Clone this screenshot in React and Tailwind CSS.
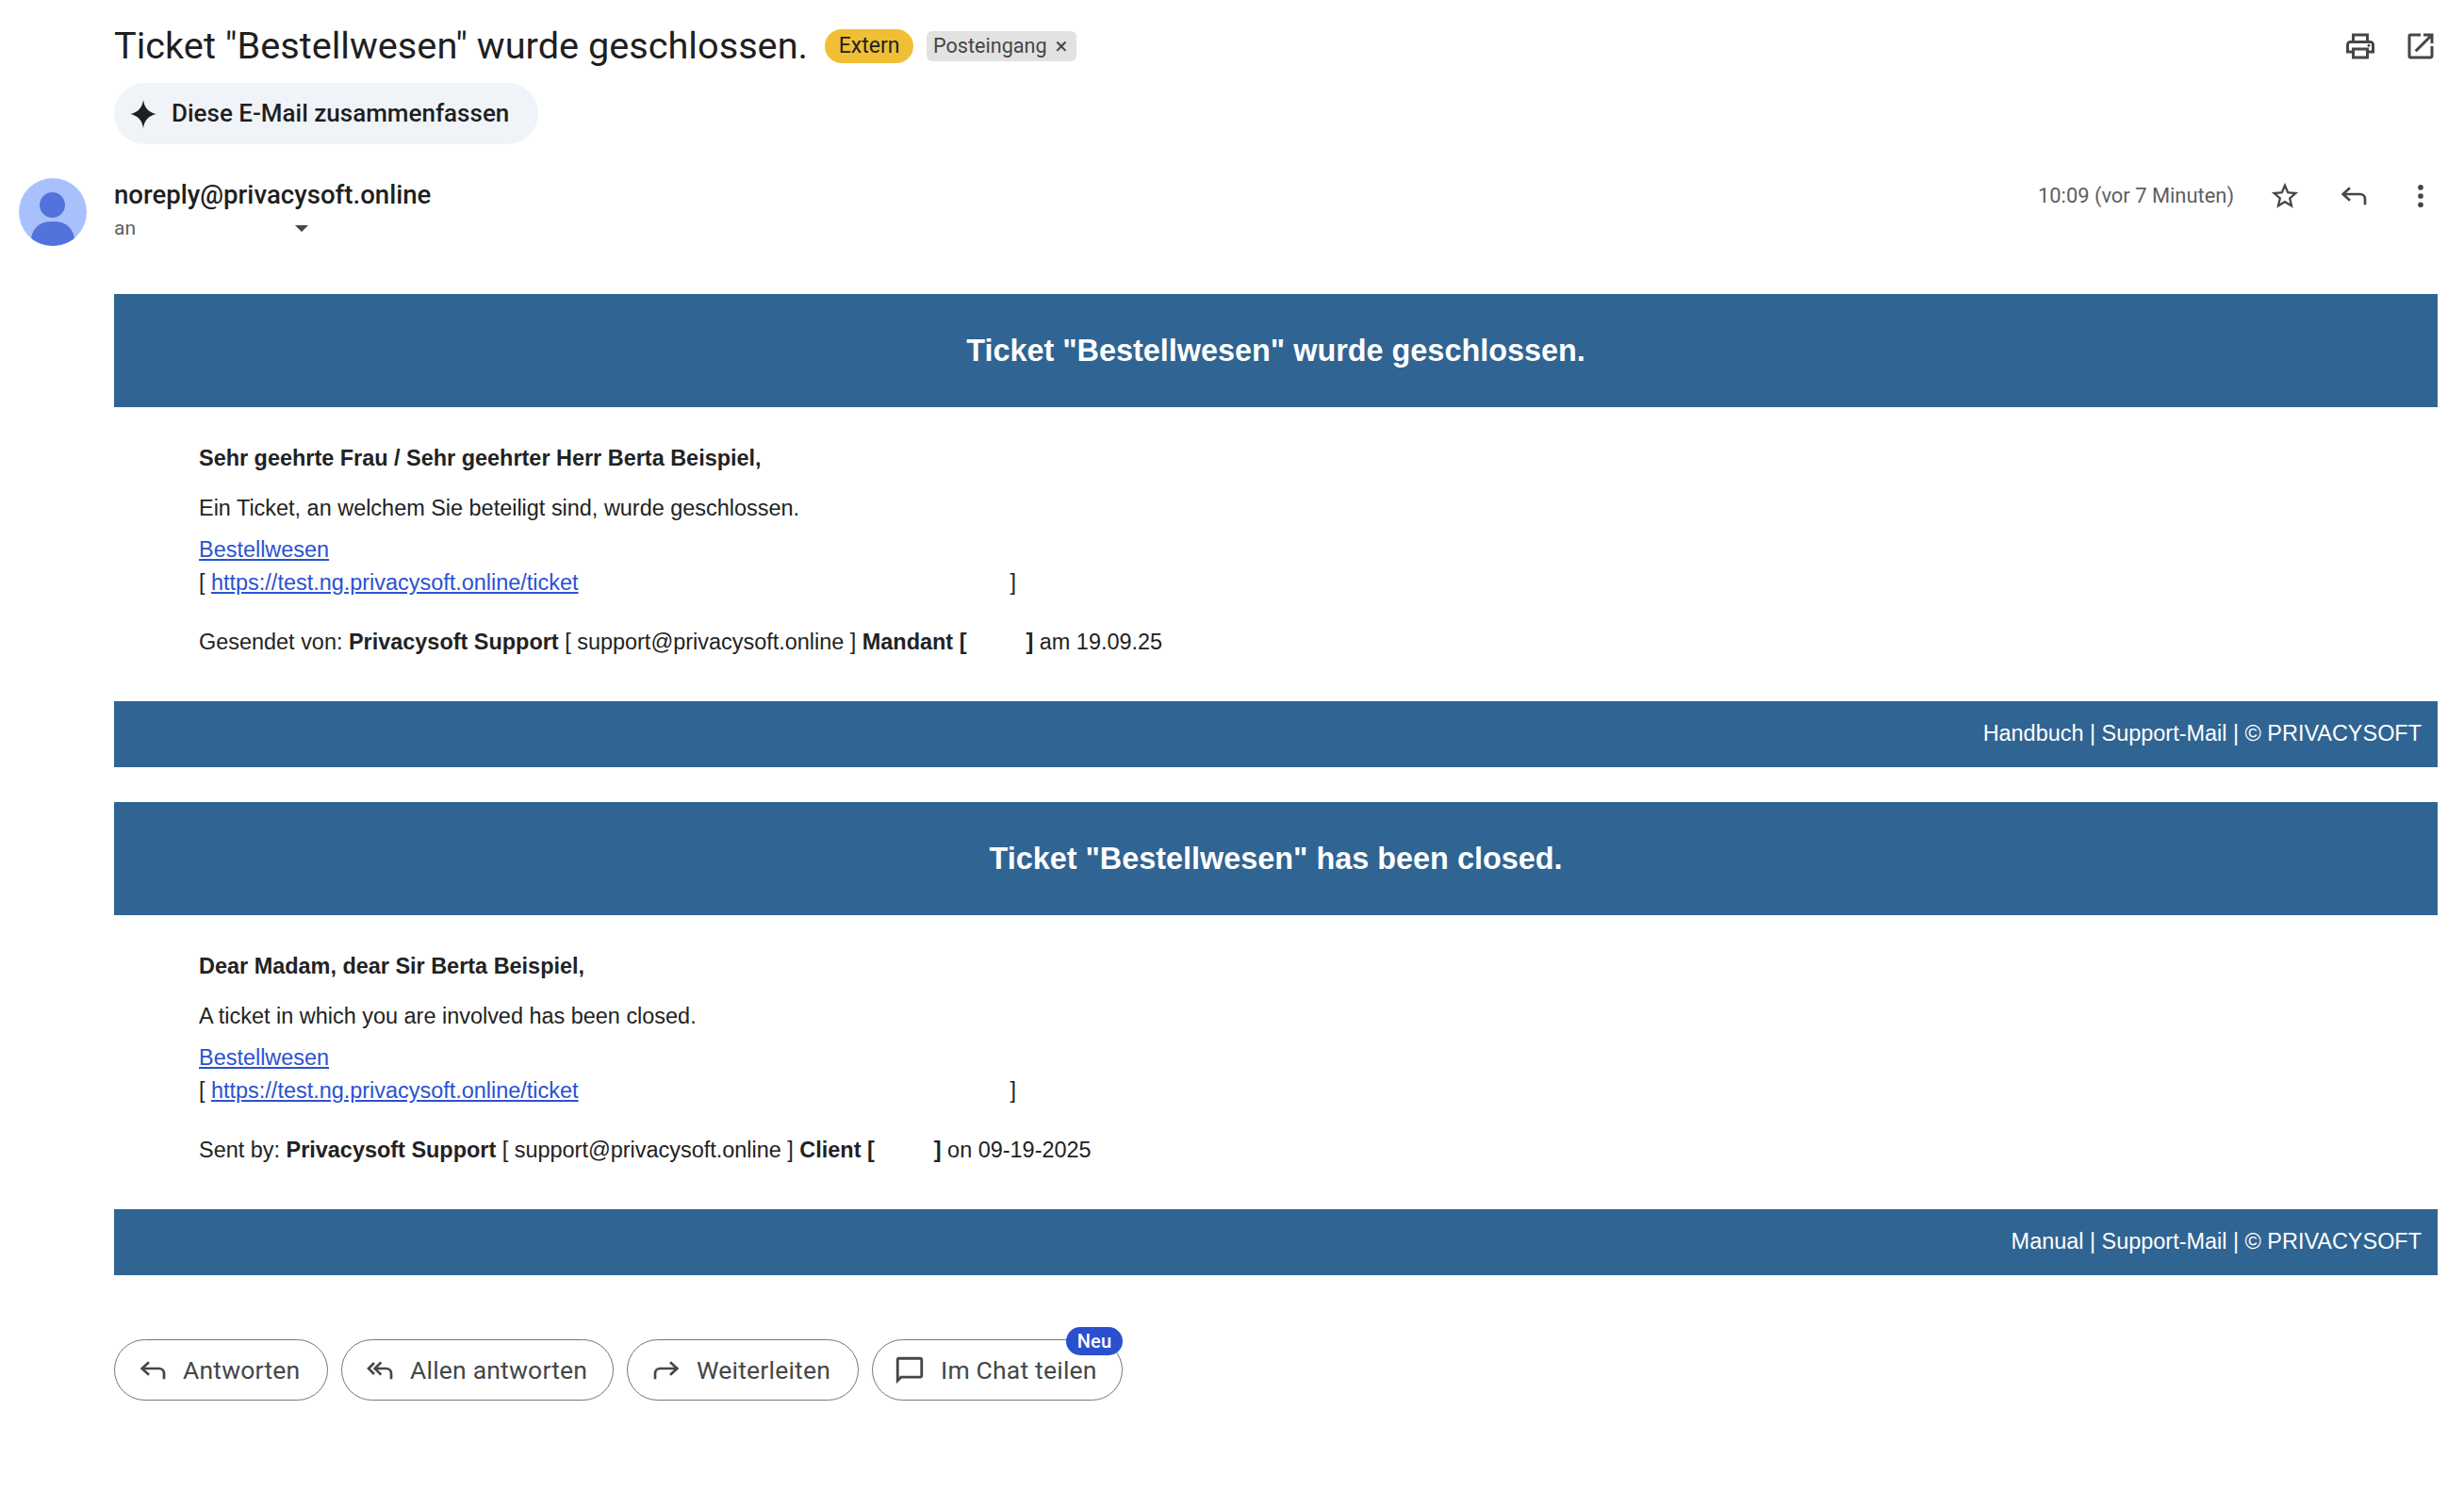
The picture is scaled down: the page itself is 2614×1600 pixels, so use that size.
const ticketBlue = 'bg-[#2f6493]'

const Icon = ({ className = '', children }) => (
  <svg viewBox="0 0 24 24" className={className} fill="currentColor">
    {children}
  </svg>
)

const ReplyIcon = ({ className }) => (
  <svg viewBox="0 0 24 24" className={className} fill="none" stroke="currentColor" strokeWidth="2">
    <path d="M9 5.5 3.500 10.500 9 15.500" />
    <path d="M3.500 10.500H17a4 4 0 0 1 4 4V19" />
  </svg>
)

const ReplyAllIcon = ({ className }) => (
  <svg viewBox="0 0 24 24" className={className} fill="none" stroke="currentColor" strokeWidth="2">
    <path d="M7.500 6 3 10.500 7.500 15" />
    <path d="M13 5.500 8 10.500 13 15.500" />
    <path d="M8 10.500h9a4 4 0 0 1 4 4V19" />
  </svg>
)

const ForwardIcon = ({ className }) => (
  <svg viewBox="0 0 24 24" className={className} fill="none" stroke="currentColor" strokeWidth="2">
    <path d="M15 5.500 20.500 10.500 15 15.500" />
    <path d="M20.500 10.500H7a4 4 0 0 0-4 4V19" />
  </svg>
)

const ChatIcon = ({ className }) => (
  <Icon className={className}>
    <path d="M20 2H4c-1.100 0-2 .9-2 2v18l4-4h14c1.100 0 2-.9 2-2V4c0-1.100-.9-2-2-2zm0 14H5.170L4 17.170V4h16v12z" />
  </Icon>
)

const Avatar = () => (
  <div className="relative h-[72px] w-[72px] shrink-0 overflow-hidden rounded-full bg-[#a8c1fd]">
    <div className="absolute left-[22px] top-[15px] h-[27px] w-[27px] rounded-full bg-[#5273dc]" />
    <div className="absolute left-[13px] top-[46px] h-[40px] w-[46px] rounded-[20px] bg-[#5273dc]" />
  </div>
)

const MailSection = ({ title, greeting, intro, footer, sentBy }) => (
  <section className="font-['Liberation_Sans',Arial,sans-serif] text-[23.450px] text-[#222222]">
    <div className={`flex h-[120px] items-center justify-center text-[32.400px] font-bold text-white ${ticketBlue}`}>
      {title}
    </div>
    <div className="pl-[90px] pt-[41px]">
      <p className="h-[27px] font-bold leading-[27px]">{greeting}</p>
      <p className="mt-[26px] h-[27px] leading-[27px]">{intro}</p>
      <p className="mt-[17px] h-[27px] leading-[27px]">
        <a className="text-[#2a52d0] underline">Bestellwesen</a>
      </p>
      <p className="mt-[8px] h-[27px] leading-[27px]">
        [ <a className="text-[#2a52d0] underline">https://test.ng.privacysoft.online/ticket</a>
        <span className="inline-block w-[458px]" />]
      </p>
      <p className="mt-[36px] h-[27px] leading-[27px]">{sentBy}</p>
    </div>
    <div className={`mt-[49px] flex h-[70px] items-center justify-end pr-[17px] text-white ${ticketBlue}`}>
      {footer}
    </div>
  </section>
)

const ActionButton = ({ icon, label, className = '', children }) => (
  <button className={`relative flex h-[65px] items-center rounded-full border border-[#747775] font-['Roboto',sans-serif] text-[26.500px] tracking-[0.2px] text-[#444746] ${className}`}>
    {icon}
    <span className="ml-[16px]">{label}</span>
    {children}
  </button>
)

export default function App() {
  return (
    <div className="min-h-[1600px] bg-white pl-[121px] pr-[28px] pt-[22px] font-['Roboto',sans-serif]">
      {/* Subject */}
      <div className="flex h-[54px] items-center">
        <h1 className="text-[39.700px] font-normal leading-[54px] text-[#1f1f1f]">
          Ticket "Bestellwesen" wurde geschlossen.
        </h1>
        <span className="ml-[18px] flex h-[36px] w-[94px] items-center justify-center rounded-full bg-[#f0bf35] text-[23px] text-[#222222]">
          Extern
        </span>
        <span className="ml-[14px] flex h-[32px] w-[159px] items-center gap-[9px] rounded-[6px] bg-[#e2e2e1] pl-[7px] text-[21.600px] text-[#444746]">
          Posteingang
          <span className="text-[24px] leading-none">×</span>
        </span>
        <div className="ml-auto flex items-center gap-[28px] text-[#444746]">
          <Icon className="h-[36px] w-[36px]">
            <path d="M19 8h-1V3H6v5H5c-1.660 0-3 1.340-3 3v6h4v4h12v-4h4v-6c0-1.660-1.340-3-3-3zM8 5h8v3H8V5zm8 12v2H8v-4h8v2zm2-2v-2H6v2H4v-4c0-.55.45-1 1-1h14c.55 0 1 .45 1 1v4h-2z" />
            <circle cx="18" cy="11.500" r="1" />
          </Icon>
          <Icon className="h-[36px] w-[36px]">
            <path d="M19 19H5V5h7V3H5a2 2 0 0 0-2 2v14a2 2 0 0 0 2 2h14c1.100 0 2-.9 2-2v-7h-2v7zM14 3v2h3.590l-9.830 9.830 1.410 1.410L19 6.410V10h2V3h-7z" />
          </Icon>
        </div>
      </div>

      {/* Summary */}
      <button className="mt-[12px] flex h-[65px] w-[450px] items-center rounded-full bg-[#f0f4f9] pl-[16px] text-[26px] font-medium text-[#1f1f1f]">
        <svg viewBox="0 0 24 24" className="h-[30px] w-[30px]" fill="currentColor">
          <path d="M12 0c1 7 4.500 10.500 11 12-6.500 1.500-10 5-11 12-1-7-4.500-10.500-11-12C7.500 10.500 11 7 12 0z" />
        </svg>
        <span className="ml-[15px]">Diese E-Mail zusammenfassen</span>
      </button>

      {/* Sender */}
      <div className="-ml-[101px] mt-[36px] flex h-[72px] items-start">
        <Avatar />
        <div className="ml-[29px]">
          <p className="mt-[4px] text-[27.600px] font-medium leading-[28px] text-[#1f1f1f]">noreply@privacysoft.online</p>
          <div className="mt-[9px] flex items-center text-[21px] leading-[24px] text-[#5e5e5e]">
            an
            <span className="ml-[169px] h-0 w-0 border-x-[7px] border-t-[7px] border-x-transparent border-t-[#444746]" />
          </div>
        </div>
        <div className="ml-auto flex items-center pt-[2px] text-[#444746]">
          <span className="text-[21.900px] text-[#5e5e5e]">10:09 (vor 7 Minuten)</span>
          <svg viewBox="0 0 24 24" className="ml-[37px] h-[34px] w-[34px]" fill="currentColor">
            <path d="M22 9.240l-7.190-.62L12 2 9.190 8.630 2 9.240l5.460 4.730L5.820 21 12 17.270 18.180 21l-1.630-7.030L22 9.240zM12 15.400l-3.760 2.270 1-4.280-3.320-2.880 4.380-.38L12 6.100l1.710 4.040 4.380.38-3.320 2.880 1 4.280L12 15.400z" />
          </svg>
          <ReplyIcon className="ml-[40px] h-[32px] w-[32px]" />
          <svg viewBox="0 0 24 24" className="ml-[38px] mr-[1px] h-[34px] w-[34px]" fill="currentColor">
            <circle cx="12" cy="5.500" r="2" />
            <circle cx="12" cy="12" r="2" />
            <circle cx="12" cy="18.500" r="2" />
          </svg>
        </div>
      </div>

      {/* Mail body */}
      <div className="mt-[51px]">
        <MailSection
          title={'Ticket "Bestellwesen" wurde geschlossen.'}
          greeting="Sehr geehrte Frau / Sehr geehrter Herr Berta Beispiel,"
          intro="Ein Ticket, an welchem Sie beteiligt sind, wurde geschlossen."
          footer="Handbuch | Support-Mail | © PRIVACYSOFT"
          sentBy={
            <>
              Gesendet von: <b>Privacysoft Support</b> [ support@privacysoft.online ] <b>Mandant [</b>
              <span className="inline-block w-[63px]" />
              <b>]</b> am 19.09.25
            </>
          }
        />
        <div className="mt-[37px]">
          <MailSection
            title={'Ticket "Bestellwesen" has been closed.'}
            greeting="Dear Madam, dear Sir Berta Beispiel,"
            intro="A ticket in which you are involved has been closed."
            footer="Manual | Support-Mail | © PRIVACYSOFT"
            sentBy={
              <>
                Sent by: <b>Privacysoft Support</b> [ support@privacysoft.online ] <b>Client [</b>
                <span className="inline-block w-[63px]" />
                <b>]</b> on 09-19-2025
              </>
            }
          />
        </div>
      </div>

      {/* Actions */}
      <div className="mt-[68px] flex">
        <ActionButton className="w-[227px] pl-[24px]" icon={<ReplyIcon className="h-[32px] w-[32px]" />} label="Antworten" />
        <ActionButton className="ml-[14px] w-[289px] pl-[24px]" icon={<ReplyAllIcon className="h-[32px] w-[32px]" />} label="Allen antworten" />
        <ActionButton className="ml-[14px] w-[246px] pl-[25px]" icon={<ForwardIcon className="h-[32px] w-[32px]" />} label="Weiterleiten" />
        <ActionButton className="ml-[14px] w-[266px] pl-[24px]" icon={<ChatIcon className="-ml-[2px] h-[34px] w-[34px]" />} label="Im Chat teilen">
          <span className="absolute -right-[1px] -top-[14px] flex h-[30px] w-[60px] items-center justify-center rounded-full bg-[#2b50cf] text-[20px] font-medium text-white">
            Neu
          </span>
        </ActionButton>
      </div>
    </div>
  )
}
